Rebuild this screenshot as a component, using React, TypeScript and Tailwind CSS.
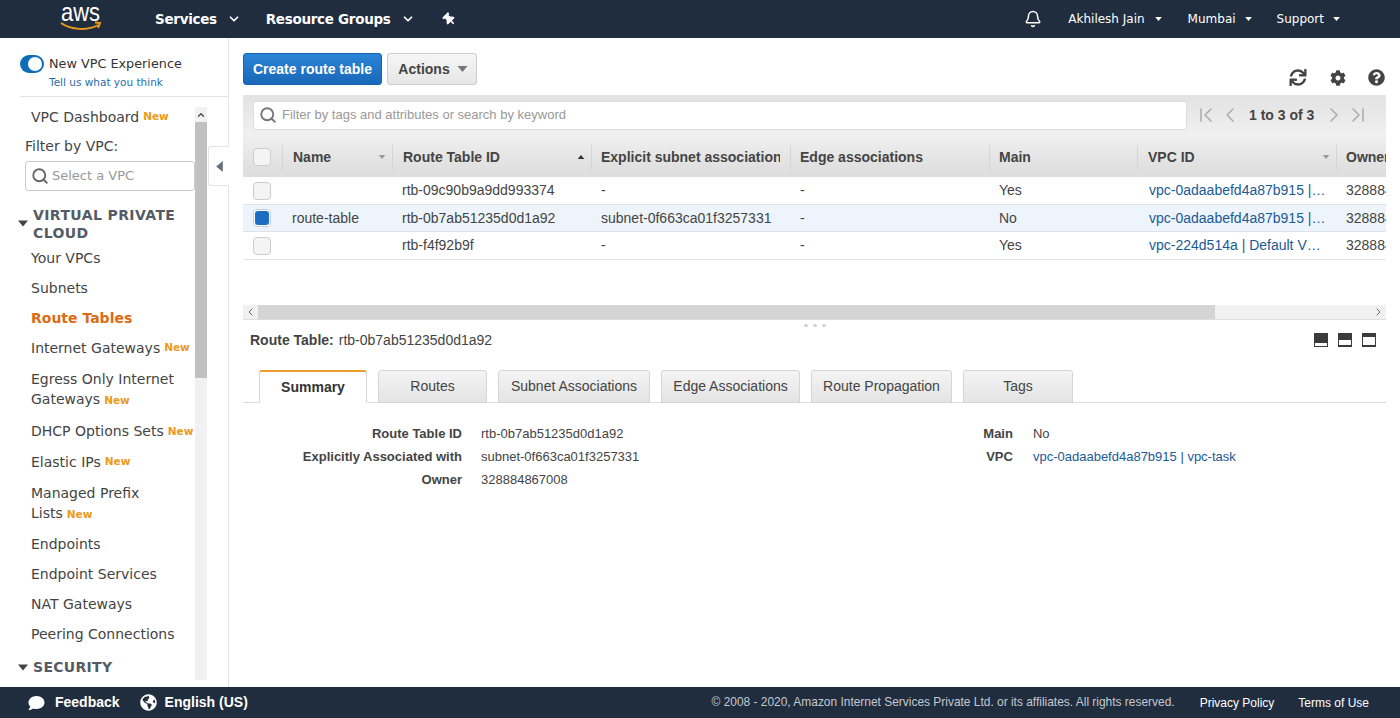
import { Bell, ChevronDown, ChevronFirst, ChevronLast, ChevronLeft, ChevronRight, ChevronUp, Search } from "lucide-react";
import { FaCog, FaComment, FaGlobeAmericas, FaQuestionCircle, FaSync, FaThumbtack } from "react-icons/fa";

const Caret = ({ className }: { className: string }) => (
  <svg viewBox="0 0 10 6" className={className}>
    <path d="M0 0h10L5 6z" fill="currentColor" />
  </svg>
);

const NewTag = () => <span className="ml-[4px] text-[10.5px] font-bold text-[#ec9a1c]">New</span>;

const NavItem = ({ label, tag, active, tall }: { label: string; tag?: boolean; active?: boolean; tall?: boolean }) => (
  <div className={`flex items-center whitespace-nowrap pl-[31px] text-[14px] ${tall ? "h-[31px]" : "h-[30px]"} ${active ? "font-bold text-[#dd6b10]" : "text-[#444]"}`}>
    {label}
    {tag && <NewTag />}
  </div>
);

const TwoLineItem = ({ first, second, short }: { first: string; second: string; short?: boolean }) => (
  <div className={`py-[7px] pl-[31px] text-[14px] leading-[19.5px] text-[#444] ${short ? "h-[52px]" : "h-[53px]"}`}>
    {first}
    <br />
    {second}
    <NewTag />
  </div>
);

const Sidebar = () => (
  <aside className="relative flex h-full w-[229px] shrink-0 flex-col border-r border-[#e4e4e4] font-['DejaVu_Sans',sans-serif]">
    <div className="ml-[20px] h-[41px] border-b border-[#e2e2e2] pt-[17px]" style={{ boxSizing: "content-box" }}>
      <div className="flex items-center">
        <span className="relative h-[18px] w-[24px] rounded-full bg-[#0f6cb6]">
          <span className="absolute right-[2px] top-[2px] h-[14px] w-[14px] rounded-full bg-white" />
        </span>
        <span className="ml-[5px] text-[12.8px] leading-[18px] text-[#333]">New VPC Experience</span>
      </div>
      <div className="ml-[29px] mt-[1px] text-[10.5px] leading-[16px] text-[#2a6ca8]">Tell us what you think</div>
    </div>
    <div className="mt-[10px] flex h-[573px] overflow-hidden">
      <div className="w-[195px] shrink-0 overflow-hidden">
        <div className="flex h-[20px] items-center pl-[31px] text-[14px] text-[#444]">
          VPC Dashboard
          <NewTag />
        </div>
        <div className="ml-[25px] mt-[9px] text-[14px] leading-[20px] text-[#444]">Filter by VPC:</div>
        <div className="ml-[25px] mt-[5px] flex h-[30px] w-[170px] items-center rounded-[3px] border border-[#ccc] bg-white pl-[5px]">
          <Search className="h-[18px] w-[18px] text-[#666]" strokeWidth={2.5} />
          <span className="ml-[3px] text-[13px] text-[#999]">Select a VPC</span>
        </div>
        <div className="mt-[15px] flex pl-[18px]">
          <Caret className="mt-[14px] h-[7px] w-[10px] text-[#444]" />
          <div className="ml-[5px] text-[14px] font-bold leading-[18px] tracking-[0.4px] text-[#545b64]">
            VIRTUAL PRIVATE
            <br />
            CLOUD
          </div>
        </div>
        <div className="mt-[1px]">
          <NavItem label="Your VPCs" />
          <NavItem label="Subnets" />
          <NavItem label="Route Tables" active />
          <NavItem label="Internet Gateways" tag />
          <TwoLineItem first="Egress Only Internet" second="Gateways" />
          <NavItem label="DHCP Options Sets" tag tall />
          <NavItem label="Elastic IPs" tag />
          <TwoLineItem first="Managed Prefix" second="Lists" short />
          <NavItem label="Endpoints" />
          <NavItem label="Endpoint Services" />
          <NavItem label="NAT Gateways" />
          <NavItem label="Peering Connections" />
        </div>
        <div className="mt-[9px] flex items-center pl-[18px]">
          <Caret className="h-[7px] w-[10px] text-[#444]" />
          <span className="ml-[5px] text-[14px] font-bold leading-[18px] tracking-[0.3px] text-[#545b64]">SECURITY</span>
        </div>
      </div>
      <div className="flex w-[12px] flex-col bg-[#f1f1f1]">
        <div className="flex h-[15px] items-center justify-center">
          <ChevronUp className="h-[10px] w-[10px] text-[#444]" strokeWidth={3} />
        </div>
        <div className="h-[256px] bg-[#c1c1c1]" />
      </div>
    </div>
    <div className="absolute left-[208px] top-[108px] flex h-[40px] w-[21px] items-center justify-center rounded-l-[3px] border border-r-0 border-[#e4e4e4] bg-white">
      <svg viewBox="0 0 6 10" className="h-[11px] w-[7px] text-[#687078]">
        <path d="M6 0v10L0 5z" fill="currentColor" />
      </svg>
    </div>
  </aside>
);

const cols = "grid grid-cols-[39px_110px_199px_199px_199px_148px_199px_50px]";

const HeadCell = ({ label, caret, up, last }: { label: string; caret?: boolean; up?: boolean; last?: boolean }) => (
  <div className={`flex h-[25px] items-center justify-between overflow-hidden whitespace-nowrap border-l border-[#d5d5d5] text-[14px] font-bold text-[#444] ${caret ? "pl-[10px] pr-[6px]" : last ? "pl-[9px]" : "pl-[9px] pr-[10px]"}`}>
    <span className="overflow-hidden">{label}</span>
    {caret && <Caret className={`h-[4px] w-[8px] shrink-0 ${up ? "rotate-180 text-[#333]" : "text-[#999]"}`} />}
  </div>
);

const Check = ({ on }: { on?: boolean }) => (
  <span className={`flex h-[18px] w-[18px] items-center justify-center rounded-[4px] border ${on ? "border-[#c4d0dc] bg-white" : "border-[#ccc] bg-[#f4f4f4]"}`}>
    {on && <span className="h-[14px] w-[14px] rounded-[3px] bg-[#1b6ec2]" />}
  </span>
);

const rows = [
  { id: "rtb-09c90b9a9dd993374", name: "", subnet: "-", main: "Yes", vpc: "vpc-0adaabefd4a87b915 |…", h: "h-[28px]" },
  { id: "rtb-0b7ab51235d0d1a92", name: "route-table", subnet: "subnet-0f663ca01f3257331", main: "No", vpc: "vpc-0adaabefd4a87b915 |…", on: true, h: "h-[27px]" },
  { id: "rtb-f4f92b9f", name: "", subnet: "-", main: "Yes", vpc: "vpc-224d514a | Default V…", h: "h-[28px]" },
];

const Table = () => (
  <div className="overflow-hidden text-[14px]">
    <div className={`${cols} h-[42px] items-center bg-gradient-to-b from-[#f0f0f0] to-[#dcdcdc] pt-[2px]`}>
      <div className="pl-[10px]">
        <Check />
      </div>
      <HeadCell label="Name" caret />
      <HeadCell label="Route Table ID" caret up />
      <HeadCell label="Explicit subnet association" />
      <HeadCell label="Edge associations" />
      <HeadCell label="Main" />
      <HeadCell label="VPC ID" caret />
      <HeadCell label="Owner" last />
    </div>
    {rows.map((r) => (
      <div key={r.id} className={`${cols} ${r.h} items-center border-b border-[#dfe3e8] text-[#444] ${r.on ? "bg-[#edf4fb]" : "bg-white"}`}>
        <div className="pl-[10px]">
          <Check on={r.on} />
        </div>
        <div className="pl-[10px]">{r.name}</div>
        <div className="pl-[10px]">{r.id}</div>
        <div className="pl-[10px]">{r.subnet}</div>
        <div className="pl-[10px]">-</div>
        <div className="pl-[10px]">{r.main}</div>
        <div className="whitespace-nowrap pl-[12px] text-[#1a5a96]">{r.vpc}</div>
        <div className="overflow-hidden pl-[10px]">328884867008</div>
      </div>
    ))}
  </div>
);

const tabs = [
  { label: "Summary", w: "w-[108px]", active: true },
  { label: "Routes", w: "w-[109px]" },
  { label: "Subnet Associations", w: "w-[152px]" },
  { label: "Edge Associations", w: "w-[139px]" },
  { label: "Route Propagation", w: "w-[141px]" },
  { label: "Tags", w: "w-[110px]" },
];

const Detail = ({ label, value, link }: { label: string; value: string; link?: boolean }) => (
  <>
    <div className="text-right text-[13px] font-bold leading-[23px] text-[#444]">{label}</div>
    <div className={`text-[13px] leading-[23px] ${link ? "text-[#1a5a96]" : "text-[#444]"}`}>{value}</div>
  </>
);

const Main = () => (
  <main className="min-w-0 flex-1 pl-[14px] pr-[14px] font-['Liberation_Sans',sans-serif]">
    <div className="flex h-[42px] items-start pt-[15px]" style={{ boxSizing: "content-box" }}>
      <button className="h-[32px] w-[139px] rounded-[3px] border border-[#1566b0] bg-gradient-to-b from-[#2a85d6] to-[#1a67b8] text-[14px] font-bold text-white">
        Create route table
      </button>
      <button className="ml-[5px] flex h-[32px] w-[90px] items-center justify-center gap-[7px] rounded-[3px] border border-[#ccc] bg-gradient-to-b from-[#f6f6f6] to-[#e6e6e6] pl-[2px] text-[14px] font-bold text-[#444]">
        Actions
        <Caret className="h-[6px] w-[11px] text-[#777]" />
      </button>
      <div className="ml-auto flex items-center gap-[22px] pr-[1px] pt-[16px] text-[#444]">
        <FaSync className="h-[17px] w-[20px]" />
        <FaCog className="h-[16px] w-[16px]" />
        <FaQuestionCircle className="h-[17px] w-[17px]" />
      </div>
    </div>
    <div className="flex h-[40px] items-center bg-gradient-to-b from-[#e2e2e2] to-[#f0f0f0] pl-[10px]">
      <div className="flex h-[29px] w-[934px] items-center rounded-[3px] border border-[#ddd] bg-white pl-[5px]">
        <Search className="h-[18px] w-[18px] text-[#777]" strokeWidth={2.5} />
        <span className="ml-[5px] text-[13px] text-[#999]">Filter by tags and attributes or search by keyword</span>
      </div>
      <div className="ml-[7px] flex items-center text-[#aaa]">
        <ChevronFirst className="h-6 w-6" strokeWidth={1.5} />
        <ChevronLeft className="h-6 w-6" strokeWidth={1.5} />
        <span className="ml-[7px] text-[14px] font-bold text-[#444]">1 to 3 of 3</span>
        <ChevronRight className="ml-[8px] h-6 w-6" strokeWidth={1.5} />
        <ChevronLast className="h-6 w-6" strokeWidth={1.5} />
      </div>
    </div>
    <Table />
    <div className="mt-[45px] flex h-[15px] items-center border-b border-[#ddd] bg-[#f1f1f1]">
      <ChevronLeft className="h-[12px] w-[15px] shrink-0 text-[#666]" />
      <div className="h-full w-[957px] bg-[#d4d4d4]" />
      <ChevronRight className="ml-auto h-[12px] w-[15px] shrink-0 text-[#666]" />
    </div>
    <div className="mt-[4px] flex justify-center gap-[5px]">
      <span className="h-[3px] w-[4px] rounded-full bg-[#d2d2d2]" />
      <span className="h-[3px] w-[4px] rounded-full bg-[#d2d2d2]" />
      <span className="h-[3px] w-[4px] rounded-full bg-[#d2d2d2]" />
    </div>
    <div className="mt-[1px] flex h-[24px] items-center pl-[7px] text-[14px] text-[#444]">
      <span className="font-bold">Route Table:</span>
      <span className="ml-[5px]">rtb-0b7ab51235d0d1a92</span>
      <div className="ml-auto flex gap-[10px] pr-[10px]">
        <span className="flex h-[14px] w-[14px] flex-col justify-end bg-[#3b3b3b] p-[1px]">
          <span className="h-[3px] bg-white" />
        </span>
        <span className="flex h-[14px] w-[14px] flex-col justify-end bg-[#3b3b3b] px-[1px] pb-[2px]">
          <span className="h-[5px] bg-white" />
        </span>
        <span className="flex h-[14px] w-[14px] flex-col bg-[#3b3b3b] px-[1px] pb-[2px] pt-[4px]">
          <span className="h-full bg-white" />
        </span>
      </div>
    </div>
    <div className="mt-[18px] flex h-[33px] gap-[11px] border-b border-[#ddd] pl-[16px]">
      {tabs.map((t) => (
        <div
          key={t.label}
          className={`${t.w} flex h-[33px] items-center justify-center rounded-t-[3px] border border-[#d5d5d5] text-[14px] ${
            t.active ? "border-t-2 border-t-[#eb9c2c] border-b-white bg-white font-bold text-[#333]" : "bg-gradient-to-b from-[#f4f4f4] to-[#e4e4e4] text-[#444]"
          }`}
        >
          {t.label}
        </div>
      ))}
    </div>
    <div className="mt-[19px] flex text-[13px]">
      <div className="grid grid-cols-[219px_auto] gap-x-[19px]">
        <Detail label="Route Table ID" value="rtb-0b7ab51235d0d1a92" />
        <Detail label="Explicitly Associated with" value="subnet-0f663ca01f3257331" />
        <Detail label="Owner" value="328884867008" />
      </div>
      <div className="ml-[344px] grid h-fit grid-cols-[auto_1fr] gap-x-[20px]">
        <Detail label="Main" value="No" />
        <Detail label="VPC" value="vpc-0adaabefd4a87b915 | vpc-task" link />
      </div>
    </div>
  </main>
);

export default function App() {
  return (
    <div className="flex h-[718px] w-[1400px] flex-col overflow-hidden bg-white">
      <header className="flex h-[38px] shrink-0 items-center bg-[#1f2d3f] font-['DejaVu_Sans',sans-serif] text-white">
        <div className="relative ml-[60px] h-[38px] w-[42px]">
          <span className="absolute left-[1px] top-[3px] scale-y-[1.2] font-['Liberation_Sans',sans-serif] text-[22px] leading-[20px]">aws</span>
          <svg viewBox="0 0 42 10" className="absolute left-0 top-[21px] h-[10px] w-[42px]">
            <path d="M1 2c10 7 27 8 37 2M35 1.5l5 .5-2 5" stroke="#ec9a1c" strokeWidth="2" fill="none" />
          </svg>
        </div>
        <span className="ml-[53px] text-[13.5px] font-semibold tracking-[-0.3px]">Services</span>
        <ChevronDown className="ml-[10px] h-[14px] w-[14px]" strokeWidth={3} />
        <span className="ml-[25px] text-[13.5px] font-semibold tracking-[-0.3px]">Resource Groups</span>
        <ChevronDown className="ml-[10px] h-[14px] w-[14px]" strokeWidth={3} />
        <FaThumbtack className="ml-[28px] h-[13px] w-[13px] -rotate-45" />
        <Bell className="ml-auto h-[18px] w-[18px]" />
        <span className="ml-[26px] text-[12px]">Akhilesh Jain</span>
        <Caret className="ml-[10px] h-[4px] w-[7px]" />
        <span className="ml-[26px] text-[12px]">Mumbai</span>
        <Caret className="ml-[9px] h-[4px] w-[7px]" />
        <span className="ml-[25px] text-[12px]">Support</span>
        <Caret className="ml-[9px] mr-[60px] h-[4px] w-[7px]" />
      </header>
      <div className="flex min-h-0 flex-1">
        <Sidebar />
        <Main />
      </div>
      <footer className="flex h-[31px] shrink-0 items-center bg-[#1f2d3f] font-['Liberation_Sans',sans-serif] text-white">
        <FaComment className="ml-[28px] h-[16px] w-[17px]" />
        <span className="ml-[10px] text-[14px] font-bold">Feedback</span>
        <FaGlobeAmericas className="ml-[20px] h-[17px] w-[17px]" />
        <span className="ml-[8px] text-[14px] font-bold">English (US)</span>
        <span className="ml-auto text-[11.95px] text-[#c5c9ce]">© 2008 - 2020, Amazon Internet Services Private Ltd. or its affiliates. All rights reserved.</span>
        <span className="ml-[25px] text-[12px]">Privacy Policy</span>
        <span className="ml-[24px] mr-[31px] text-[12px]">Terms of Use</span>
      </footer>
    </div>
  );
}
